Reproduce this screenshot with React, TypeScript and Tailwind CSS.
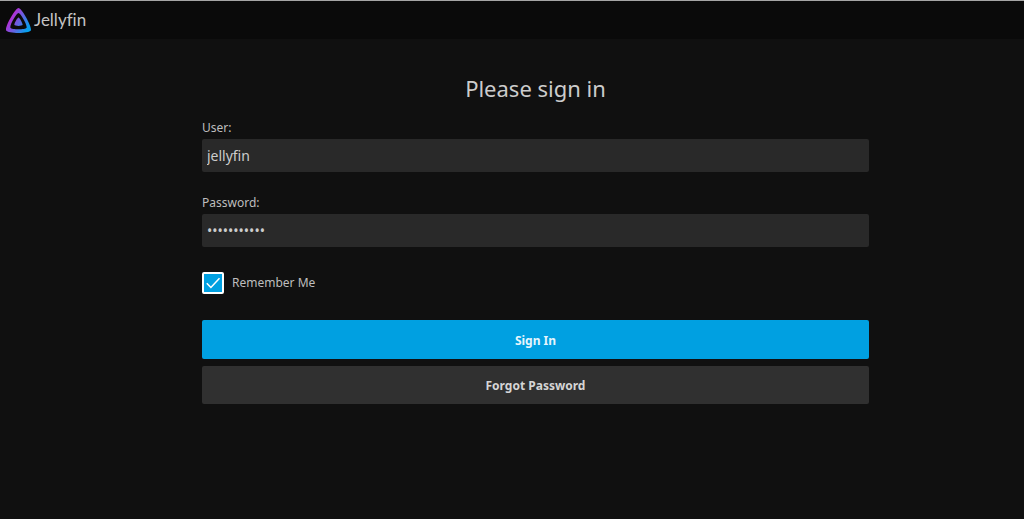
import { useState } from 'react';

function JellyfinLogo() {
  return (
    <svg viewBox="0 0 24 24" className="w-[25px] h-[25px] shrink-0" aria-hidden="true">
      <defs>
        <linearGradient id="jellyfin-gradient" x1="3" y1="9" x2="21" y2="20" gradientUnits="userSpaceOnUse">
          <stop offset="0" stopColor="#c026d3" />
          <stop offset="1" stopColor="#06a0ee" />
        </linearGradient>
      </defs>
      <path
        fill="url(#jellyfin-gradient)"
        fillRule="evenodd"
        d="M12 .002C8.826.002-1.398 18.537.16 21.666c1.56 3.129 22.14 3.094 23.682 0C25.384 18.573 15.177 0 12 0zm7.76 18.949c-1.008 2.028-14.493 2.05-15.514 0C3.224 16.9 9.92 4.755 12.003 4.755c2.081 0 8.77 12.166 7.759 14.196zM12 9.198c-1.054 0-4.446 6.15-3.93 7.189.518 1.04 7.348 1.027 7.86 0 .511-1.027-2.874-7.19-3.93-7.19z"
      />
    </svg>
  );
}

const inputClass =
  'block w-full h-[33px] px-[5px] text-sm text-[#cccccc] bg-[#292929] rounded-xs outline-none';

export default function App() {
  const [user, setUser] = useState('jellyfin');
  const [password, setPassword] = useState('jellyfin123');
  const [remember, setRemember] = useState(true);

  return (
    <div className="min-h-screen bg-[#101010] text-[#bebebe] font-['Noto_Sans',sans-serif]">
      {/* Header */}
      <header className="flex items-center gap-[3px] h-[39px] px-1.5 bg-[#0a0a0a] border-t border-[#a5a5a5]">
        <JellyfinLogo />
        <span className="text-[17px] leading-6 text-[#c4c4c4] font-[family-name:Lato,sans-serif] [font-variant-ligatures:none]">
          Jellyfin
        </span>
      </header>

      {/* Sign in form */}
      <main className="pl-[202px] pr-[155px] pt-[31px]">
        <form onSubmit={(e) => e.preventDefault()}>
          <h1 className="mb-3 text-[22px] leading-9 text-center text-[#cccccc]">Please sign in</h1>

          <div className="mb-[21px]">
            <label htmlFor="user" className="block pb-px text-xs/5">User:</label>
            <input
              id="user"
              type="text"
              value={user}
              onChange={(e) => setUser(e.target.value)}
              className={inputClass}
            />
          </div>

          <div className="mb-[25px]">
            <label htmlFor="password" className="block pb-px text-xs/5">Password:</label>
            <input
              id="password"
              type="password"
              value={password}
              onChange={(e) => setPassword(e.target.value)}
              className={inputClass}
            />
          </div>

          <label className="flex items-center gap-2 mb-[26px] w-fit text-xs/5">
            <span className="relative flex">
              <input
                type="checkbox"
                checked={remember}
                onChange={(e) => setRemember(e.target.checked)}
                className="peer appearance-none w-[22px] h-[22px] rounded-xs border-2 border-white checked:bg-[#00a0e1]"
              />
              <svg
                viewBox="0 0 23 23"
                className="absolute inset-0 hidden peer-checked:block pointer-events-none"
                fill="none"
                stroke="#ffffff"
                strokeWidth="1.6"
              >
                <path d="M5 11.8 9.3 16.2 18.3 6.5" />
              </svg>
            </span>
            Remember Me
          </label>

          <div className="flex flex-col gap-[7px]">
            <button type="submit" className="h-[39px] pt-0.5 rounded-xs bg-[#00a0e1] text-xs font-bold text-[#e6f5fc]">
              Sign In
            </button>
            <button type="button" className="h-[38px] pt-0.5 rounded-xs bg-[#303030] text-xs font-bold text-[#d5d5d5]">
              Forgot Password
            </button>
          </div>
        </form>
      </main>
    </div>
  );
}
